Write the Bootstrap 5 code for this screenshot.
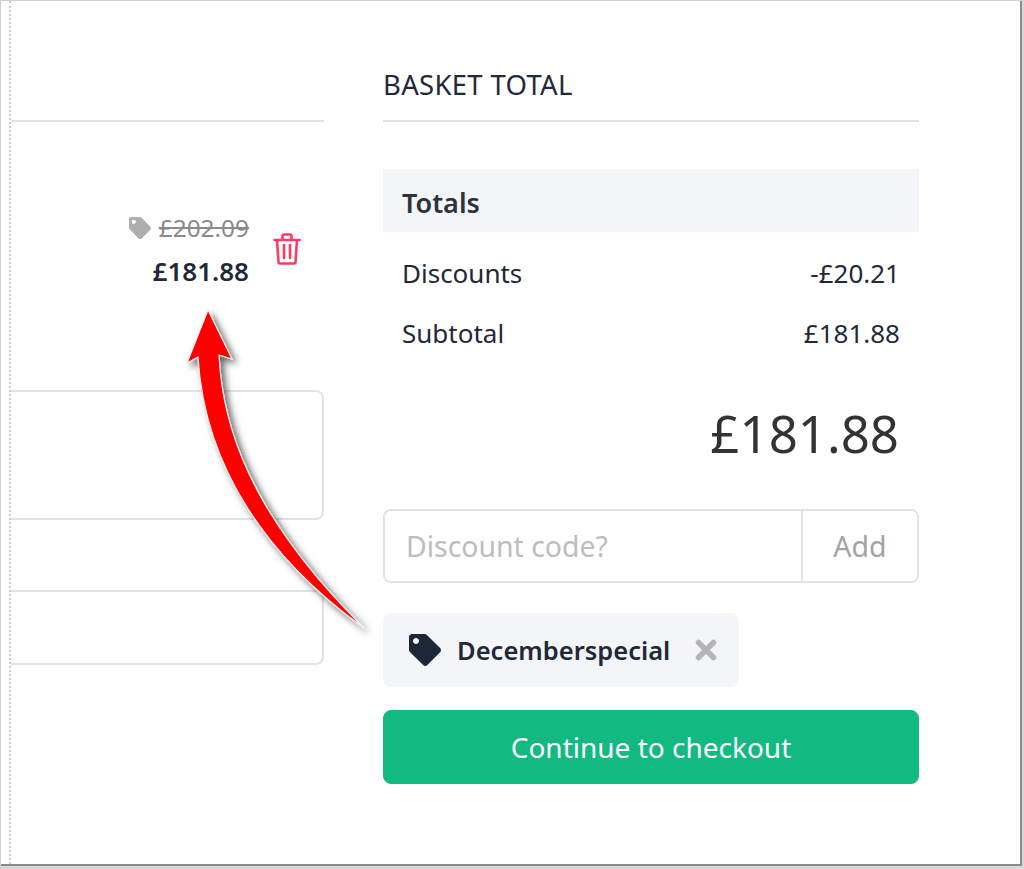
<!DOCTYPE html>
<html lang="en">
<head>
<meta charset="utf-8">
<title>Basket</title>
<link href="https://cdn.jsdelivr.net/npm/bootstrap@5.3.0/dist/css/bootstrap.min.css" rel="stylesheet">
<style>
html,body{height:869px;overflow:hidden;background:#fff}
body{font-family:"Noto Sans","Open Sans",sans-serif;color:#1f2937;position:relative}
.shot-frame{height:869px;border:solid;border-color:#cfcfcf #d8d8d8 #d8d8d8 #cfcfcf;border-width:1px 2px 3px 1px;position:relative}
.shot-inner{height:100%;border-right:2px solid #8c8c8c;border-bottom:2px solid #8c8c8c;padding-left:8px;display:flex}
.torn-edge{border-left:2px dotted #cdcdcd}
.col-left{width:313px;flex:none;margin-right:59px}
.col-right{width:536px;flex:none}
.head-zone{height:121px;border-bottom:2px solid #e2e2e2}
.basket-title{font-size:27.500px;font-weight:400;letter-spacing:.3px;color:#1f2937;margin:0;padding-top:67px;line-height:34px}
.price-area{height:268px;padding-top:89px;padding-right:75px;position:relative}
.old-price{font-size:24.400px;line-height:34px;color:#8a8a8a;text-decoration:line-through}
.new-price{font-size:26px;line-height:38px;margin-top:7px;font-weight:600;color:#1f2937}
.bin-icon{position:absolute;right:23px;top:111px}
.ghost-box{border:2px solid #e2e2e2;border-left:0;border-radius:0 8px 8px 0}
.box-a{height:130px;margin-bottom:70px}
.box-b{height:75px}
.totals-bar{background:#f4f5f9;height:63px;margin-top:47px;padding:0 19px;font-size:27px;font-weight:600;line-height:67px;color:#2d3339}
.line-row{padding:0 19px;font-size:26px;line-height:36px;height:60px;color:#1f2937}
.line-first{margin-top:23px}
.grand-amount{font-size:51px;line-height:72px;color:#333;text-align:right;padding-right:20px;margin-top:22px}
.code-group{height:74px;margin-top:40px;border:2px solid #e2e2e2;border-radius:8px;overflow:hidden}
.code-input{border:0;outline:0;width:418px;padding:0 21px;font-size:28.400px;color:#333;border-right:2px solid #e2e2e2;font-family:inherit}
.code-input::placeholder{color:#bdbdbd;opacity:1}
.code-add{flex:1;background:#fff;border:0;font-size:28.500px;color:#a3a3a3;font-family:inherit;padding:0}
.promo-chip{background:#f4f5f9;border-radius:8px;height:74px;margin-top:30px;width:356px;padding-left:26px;font-size:25.500px;font-weight:600;color:#1f2937}
.checkout-cta{--bs-btn-bg:#12b981;--bs-btn-border-color:#12b981;--bs-btn-color:#fff;--bs-btn-hover-bg:#12b981;--bs-btn-hover-color:#fff;height:74px;margin-top:23px;font-size:28px;border-radius:8px;width:100%;padding:0;font-family:inherit}
.arrow-layer{position:absolute;left:0;top:0;pointer-events:none}
</style>
</head>
<body>
<div class="shot-frame">
  <div class="shot-inner">
    <div class="torn-edge d-flex">
      <div class="col-left">
        <div class="head-zone"></div>
        <div class="price-area text-end">
          <div class="old-price d-flex justify-content-end align-items-center gap-2">
            <svg width="22" height="22" viewBox="0 0 512 512" aria-hidden="true"><path fill="#aeaeae" d="M0 252.118V48C0 21.49 21.49 0 48 0h204.118a48 48 0 0 1 33.941 14.059l211.882 211.882c18.745 18.745 18.745 49.137 0 67.882L293.823 497.941c-18.745 18.745-49.137 18.745-67.882 0L14.059 286.059A48 48 0 0 1 0 252.118zM112 64c-26.51 0-48 21.49-48 48s21.49 48 48 48 48-21.49 48-48-21.49-48-48-48z"/></svg>
            <span>£202.09</span>
          </div>
          <div class="new-price">£181.88</div>
          <svg class="bin-icon" width="28" height="32" viewBox="0 0 28 32" aria-hidden="true" fill="none" stroke="#ff3b63" stroke-width="2.600" stroke-linejoin="round" stroke-linecap="round"><path d="M1.500 7h25M9.500 7V3a1.500 1.500 0 0 1 1.500-1.500h6A1.500 1.500 0 0 1 18.500 3v4M4 7l1.500 22a1.500 1.500 0 0 0 1.500 1.500h14a1.500 1.500 0 0 0 1.500-1.500L24 7M11 12v13M17 12v13"/></svg>
        </div>
        <div class="ghost-box box-a"></div>
        <div class="ghost-box box-b"></div>
      </div>
    </div>
    <div class="col-right">
      <div class="head-zone"><h2 class="basket-title">BASKET TOTAL</h2></div>
      <div class="totals-bar">Totals</div>
      <div class="line-row line-first d-flex justify-content-between"><span>Discounts</span><span>-£20.21</span></div>
      <div class="line-row d-flex justify-content-between"><span>Subtotal</span><span>£181.88</span></div>
      <div class="grand-amount">£181.88</div>
      <div class="code-group d-flex">
        <input class="code-input" type="text" placeholder="Discount code?">
        <button class="code-add" type="button">Add</button>
      </div>
      <div class="promo-chip d-flex align-items-center">
        <svg width="32" height="32" viewBox="0 0 512 512" aria-hidden="true"><path fill="#1c2838" d="M0 252.118V48C0 21.49 21.49 0 48 0h204.118a48 48 0 0 1 33.941 14.059l211.882 211.882c18.745 18.745 18.745 49.137 0 67.882L293.823 497.941c-18.745 18.745-49.137 18.745-67.882 0L14.059 286.059A48 48 0 0 1 0 252.118zM112 64c-26.51 0-48 21.49-48 48s21.49 48 48 48 48-21.49 48-48-21.49-48-48-48z"/></svg>
        <span class="ms-3">Decemberspecial</span>
        <svg class="ms-4" width="24" height="24" viewBox="0 0 24 24" aria-hidden="true"><path d="M4.500 4.500l15 15M19.500 4.500l-15 15" stroke="#b5b5b5" stroke-width="5.500" stroke-linecap="round"/></svg>
      </div>
      <button class="btn checkout-cta" type="button">Continue to checkout</button>
    </div>
  </div>
</div>
<svg class="arrow-layer" width="1024" height="869" viewBox="0 0 1024 869" aria-hidden="true">
  <defs><filter id="arrowShadow" x="-30%" y="-10%" width="170%" height="130%"><feDropShadow dx="4" dy="4" stdDeviation="3.500" flood-color="#000" flood-opacity=".6"/></filter></defs>
  <path filter="url(#arrowShadow)" fill="#f00" stroke="#ededed" stroke-width="1.200" stroke-linejoin="miter" d="M208 310L232 359L219 355C222 420 245 510 364 628C270 560 205 470 198 357L187 363Z"/>
</svg>
</body>
</html>
